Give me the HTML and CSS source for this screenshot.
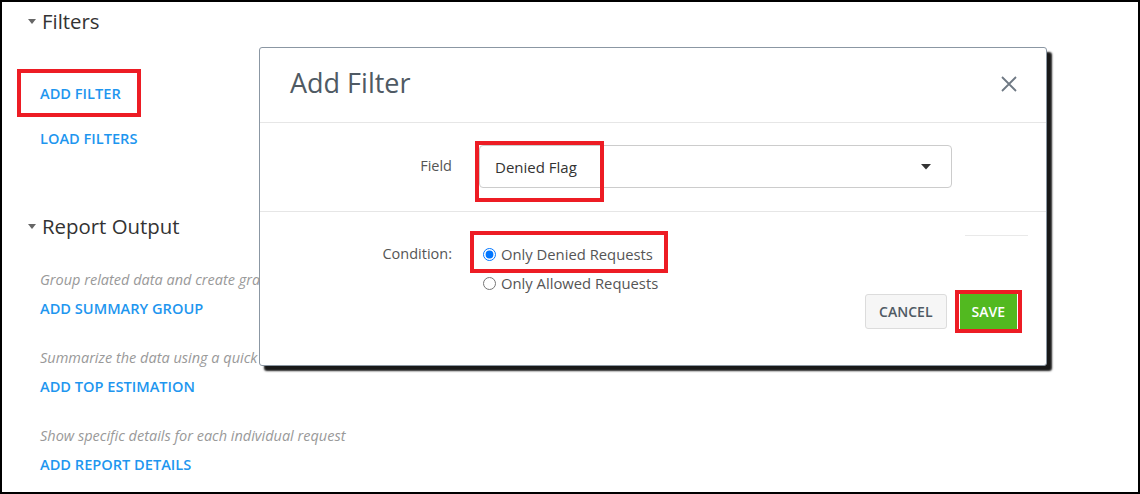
FILE: index.html
```html
<!DOCTYPE html>
<html lang="en">
<head>
    <meta charset="UTF-8">
    <meta name="viewport" content="width=device-width, initial-scale=1.0">
    <title>Report Builder</title>
    <link rel="stylesheet" href="styles.css">
</head>
<body>
    <div class="page">
        <!-- Filters -->
        <div class="section-title">
            <span class="caret"></span>
            <span>Filters</span>
        </div>
        <div class="link-list filters-links">
            <a class="action mark mark-add-filter">ADD FILTER</a>
            <a class="action">LOAD FILTERS</a>
        </div>

        <!-- Report Output -->
        <div class="section-title report-title">
            <span class="caret"></span>
            <span>Report Output</span>
        </div>
        <div class="link-list output-links">
            <p class="hint">Group related data and create graphs</p>
            <a class="action">ADD SUMMARY GROUP</a>
            <p class="hint">Summarize the data using a quick estimation</p>
            <a class="action">ADD TOP ESTIMATION</a>
            <p class="hint">Show specific details for each individual request</p>
            <a class="action">ADD REPORT DETAILS</a>
        </div>

        <!-- Add Filter dialog -->
        <div class="modal">
            <div class="modal-header">
                <h2>Add Filter</h2>
                <button class="close" aria-label="Close">
                    <svg width="16" height="16" viewBox="0 0 16 16">
                        <path d="M1 1 L15 15 M15 1 L1 15" stroke="#6f7984" stroke-width="1.8" fill="none"/>
                    </svg>
                </button>
            </div>

            <div class="modal-row field-row">
                <label class="row-label field-label">Field</label>
                <div class="select mark mark-select">
                    <span>Denied Flag</span>
                    <svg width="10" height="6" viewBox="0 0 10 6">
                        <path d="M0 0 H10 L5 5.5 Z" fill="#333"/>
                    </svg>
                </div>
            </div>

            <div class="modal-row condition-row">
                <label class="row-label">Condition:</label>
                <div class="options">
                    <label class="option mark mark-option"><input type="radio" name="cond" checked> Only Denied Requests</label>
                    <label class="option"><input type="radio" name="cond"> Only Allowed Requests</label>
                </div>
                <div class="stub"></div>
            </div>

            <div class="modal-footer">
                <button class="btn btn-cancel">CANCEL</button>
                <button class="btn btn-save mark mark-save">SAVE</button>
            </div>
        </div>
    </div>
</body>
</html>
```

FILE: styles.css
```css
* {
    margin: 0;
    padding: 0;
    box-sizing: border-box;
    font-family: "Open Sans", Arial, sans-serif;
}

body {
    background: white;
}

.page {
    position: relative;
    width: 1140px;
    height: 494px;
    border: 2px solid #000;
    padding-top: 5px;
    overflow: hidden;
}

.section-title {
    display: flex;
    align-items: center;
    gap: 6px;
    margin-left: 26px;
    font-size: 20.4px;
    line-height: 28px;
    color: #333;
}

.caret {
    width: 0;
    height: 0;
    border-left: 4px solid transparent;
    border-right: 4px solid transparent;
    border-top: 5px solid #666;
}

.link-list {
    display: flex;
    flex-direction: column;
    align-items: flex-start;
    margin-left: 38px;
}

.filters-links {
    margin-top: 48px;
    gap: 25px;
}

.report-title {
    margin-top: 64px;
}

.output-links {
    margin-top: 30px;
}

.action {
    font-size: 14.6px;
    line-height: 20px;
    font-weight: 600;
    color: #1e96ef;
    cursor: pointer;
}

.hint {
    font-size: 14.5px;
    line-height: 20px;
    font-style: italic;
    color: #999;
    margin-bottom: 8px;
}

.output-links .action + .hint {
    margin-top: 30px;
}

/* red annotation boxes */
.mark {
    position: relative;
}

.mark::after {
    content: '';
    position: absolute;
    border: 4px solid #ed1c24;
    pointer-events: none;
}

.mark-add-filter::after {
    top: -14px;
    bottom: -14px;
    left: -23px;
    right: -20px;
}

.mark-select::after {
    top: -5px;
    left: -5px;
    width: 121px;
    height: 53px;
}

.mark-option::after {
    top: -13px;
    bottom: -9px;
    left: -13px;
    right: -15px;
}

.mark-save::after {
    top: -4px;
    bottom: -4px;
    left: -5px;
    right: -5px;
}

/* modal */
.modal {
    position: absolute;
    left: 257px;
    top: 45px;
    width: 788px;
    height: 319px;
    background: white;
    border: 1px solid #8b97a3;
    border-radius: 3px;
    box-shadow: 5px 5px 2px rgba(0, 0, 0, 0.9);
    z-index: 2;
}

.modal-header {
    display: flex;
    align-items: center;
    justify-content: space-between;
    height: 75px;
    padding: 0 29px 5px 30px;
    border-bottom: 1px solid #e6e6e6;
}

.modal-header h2 {
    font-size: 27px;
    font-weight: 400;
    color: #4f5a64;
}

.close {
    background: none;
    border: none;
    display: flex;
    margin-top: 2px;
    cursor: pointer;
}

.modal-row {
    display: flex;
    border-bottom: 1px solid #e6e6e6;
}

.row-label {
    width: 192px;
    text-align: right;
    font-size: 14.5px;
    line-height: 20px;
    color: #555;
}

.field-row {
    padding: 22px 0 23px;
}

.field-label {
    margin-top: 11px;
}

.select {
    display: flex;
    align-items: center;
    justify-content: space-between;
    width: 473px;
    height: 43px;
    margin-left: 27px;
    padding: 1px 20px 0 15px;
    border: 1px solid #ccc;
    border-radius: 4px;
    font-size: 15px;
    color: #333;
}

.condition-row {
    border-bottom: none;
    padding-top: 32px;
}

.options {
    display: flex;
    flex-direction: column;
    align-items: flex-start;
    gap: 9px;
    margin-left: 31px;
}

.option {
    display: inline-flex;
    align-items: center;
    font-size: 14.8px;
    line-height: 20px;
    color: #555;
}

.option input {
    width: 13px;
    height: 13px;
    margin: 0 5px 0 0;
}

.stub {
    width: 63px;
    margin: -9px 18px 0 auto;
    height: 1px;
    background: #e9e9e9;
}

.modal-footer {
    display: flex;
    justify-content: flex-end;
    gap: 13px;
    padding-right: 29px;
    margin-top: 1px;
}

.btn {
    height: 35px;
    padding: 0 12px;
    font-size: 14px;
    font-weight: 600;
    border-radius: 3px;
    cursor: pointer;
}

.btn-cancel {
    padding: 0 13px;
    background: #f6f6f6;
    border: 1px solid #dcdcdc;
    color: #4f5a64;
}

.btn-save {
    background: #52b920;
    border: none;
    border-radius: 0;
    color: white;
}
```
